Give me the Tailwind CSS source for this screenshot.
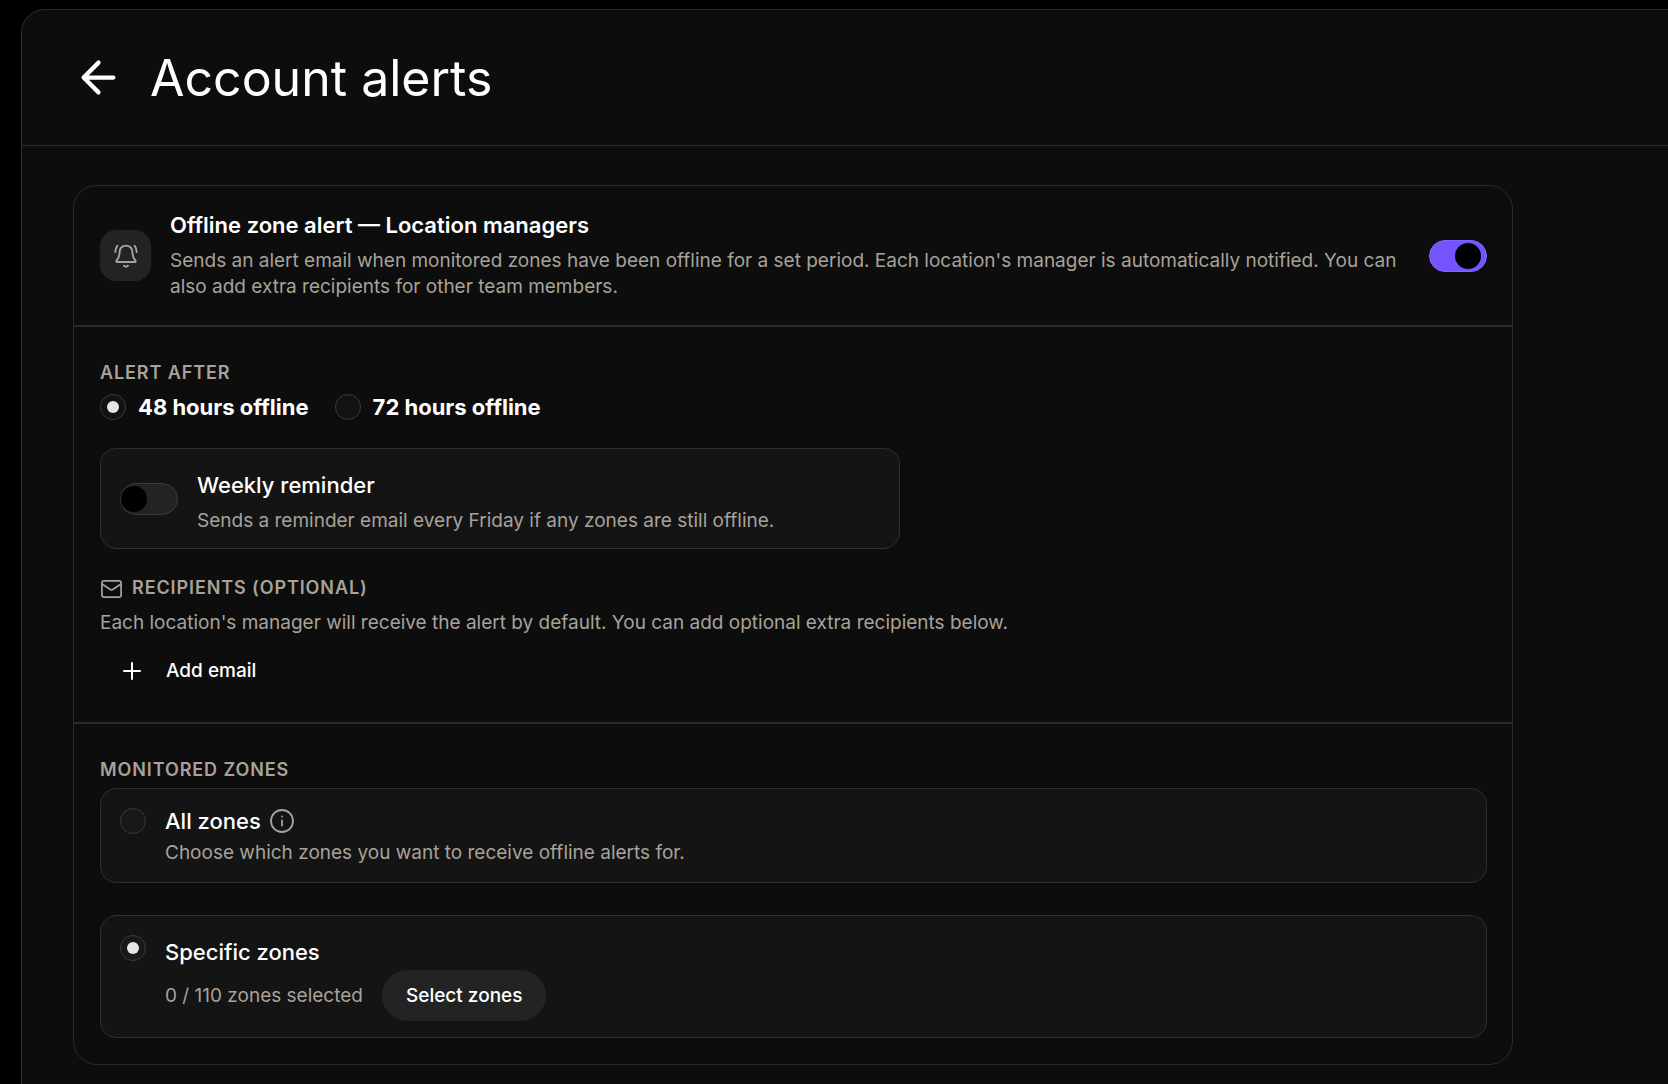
<!DOCTYPE html>
<html lang="en">
<head>
<meta charset="utf-8">
<meta name="viewport" content="width=device-width, initial-scale=1">
<title>Account alerts</title>
<script src="https://cdn.jsdelivr.net/npm/@tailwindcss/browser@4"></script>
</head>
<body class="min-h-screen bg-black pt-[9px] pl-[21px] font-['Inter',sans-serif] text-[19px] leading-[26px] text-[#a8a29a]">
<main class="flex min-h-[calc(100vh-9px)] flex-col rounded-tl-3xl border-t border-l border-[#2b2b2b] bg-[#0d0d0d]">
  <header class="flex h-[136px] items-center gap-[26px] border-b border-[#2b2b2b] px-[51px]">
    <button type="button" aria-label="Back" class="size-[51px] text-white">
      <svg class="size-full" viewBox="0 0 24 24" fill="none" stroke="currentColor" stroke-width="2" stroke-linecap="round" stroke-linejoin="round"><path d="M19 12H5M12 5l-7 7 7 7"/></svg>
    </button>
    <h1 class="text-[50px] leading-[60px] text-white">Account alerts</h1>
  </header>

  <div class="px-[51px] py-[39px]">
    <div class="max-w-[1440px] rounded-3xl border border-[#2b2b2b]">
      <section class="flex items-center gap-[19px] border-b-2 border-[#2b2b2b] py-[25px] pr-[25px] pl-[26px]">
        <div class="flex size-[51px] shrink-0 items-center justify-center rounded-2xl bg-[#232323]">
          <svg class="size-[26px]" viewBox="0 0 26 26" fill="none" stroke="currentColor" stroke-width="1.9" stroke-linecap="round" stroke-linejoin="round"><path d="M13 2.600C9 2.600 6.600 5.500 6.600 9c0 4-1.100 6.500-3 8.600-.6.800-.2 1.400.6 1.400h17.600c.8 0 1.200-.6.6-1.400-1.900-2.100-3-4.600-3-8.600 0-3.500-2.400-6.400-6.400-6.400ZM4.300 2.800C3 4.500 2.400 6.500 2.300 9M21.700 2.800C23 4.500 23.600 6.500 23.700 9M11 22.700c1 1.200 3 1.200 4 0"/></svg>
        </div>
        <div class="flex-1">
          <h2 id="offline-title" class="text-[22px] leading-[28px] font-semibold text-white">Offline zone alert — Location managers</h2>
          <p class="mt-[9px] max-w-[1235px]">Sends an alert email when monitored zones have been offline for a set period. Each location's manager is automatically notified. You can also add extra recipients for other team members.</p>
        </div>
        <label class="relative h-8 w-[58px] shrink-0">
          <input type="checkbox" role="switch" checked aria-labelledby="offline-title" class="peer block size-full appearance-none rounded-full border border-[#3a3a3a] bg-[#232323] checked:border-[#8466ff] checked:bg-[#7553ff]">
          <span class="absolute top-[3px] left-px size-[26px] rounded-full bg-black peer-checked:left-[26px]"></span>
        </label>
      </section>

      <section class="border-b-2 border-[#2b2b2b] pt-[33px] pr-[25px] pb-[26px] pl-[26px]">
        <fieldset>
          <legend class="text-lg leading-[26px] font-semibold tracking-wider uppercase">Alert after</legend>
          <div class="mt-2 flex gap-[26px]">
            <label class="flex items-center gap-3 text-[22px] leading-[26px] font-bold text-white">
              <input type="radio" name="delay" checked class="flex size-[26px] appearance-none items-center justify-center rounded-full border border-[#3a3a3a] bg-[#121212] before:size-3 before:rounded-full checked:before:bg-[#e5e5e5]">48 hours offline
            </label>
            <label class="flex items-center gap-3 text-[22px] leading-[26px] font-bold text-white">
              <input type="radio" name="delay" class="flex size-[26px] appearance-none items-center justify-center rounded-full border border-[#3a3a3a] bg-[#121212] before:size-3 before:rounded-full checked:before:bg-[#e5e5e5]">72 hours offline
            </label>
          </div>
        </fieldset>

        <div class="mt-7 flex max-w-[800px] items-center gap-[19px] rounded-2xl border border-[#2f2f2f] bg-[#141414] px-[19px] py-[14px]">
          <label class="relative h-8 w-[58px] shrink-0">
            <input type="checkbox" role="switch" aria-labelledby="weekly-title" class="peer block size-full appearance-none rounded-full border border-[#3a3a3a] bg-[#232323] checked:border-[#8466ff] checked:bg-[#7553ff]">
            <span class="absolute top-[3px] left-px size-[26px] rounded-full bg-black peer-checked:left-[26px]"></span>
          </label>
          <div class="pt-2">
            <h3 id="weekly-title" class="text-[22px] leading-[28px] font-medium text-white">Weekly reminder</h3>
            <p class="mt-[9px]">Sends a reminder email every Friday if any zones are still offline.</p>
          </div>
        </div>

        <h3 class="mt-[26px] flex items-center gap-[9px] text-lg leading-[26px] font-semibold tracking-wider uppercase">
          <svg class="size-[23px]" viewBox="0 0 24 24" fill="none" stroke="currentColor" stroke-width="1.8" stroke-linecap="round" stroke-linejoin="round"><rect x="2" y="4" width="20" height="17" rx="2"/><path d="M2.500 7.500l8.300 5.600q1.200.7 2.400 0l8.300-5.600"/></svg>
          Recipients (optional)
        </h3>
        <p class="mt-[9px]">Each location's manager will receive the alert by default. You can add optional extra recipients below.</p>
        <button type="button" class="mt-[9px] flex h-[51px] items-center gap-[22px] px-5 font-medium text-white">
          <svg class="size-6" viewBox="0 0 24 24" fill="none" stroke="currentColor" stroke-width="2" stroke-linecap="round"><path d="M12 4v16M4 12h16"/></svg>
          Add email
        </button>
      </section>

      <section class="pt-[33px] pr-[25px] pb-[26px] pl-[26px]">
        <fieldset>
          <legend class="text-lg leading-[26px] font-semibold tracking-wider uppercase">Monitored zones</legend>
          <div class="mt-[5px] flex gap-[19px] rounded-2xl border border-[#2f2f2f] bg-[#141414] px-[19px] pt-[19px] pb-4">
            <input type="radio" name="zones" id="all" class="flex size-[26px] shrink-0 appearance-none items-center justify-center rounded-full border border-[#3a3a3a] bg-[#181818] before:size-3 before:rounded-full checked:before:bg-[#e5e5e5]">
            <div>
              <div class="flex items-center gap-[9px]">
                <label for="all" class="text-[22px] leading-[26px] font-medium text-white">All zones</label>
                <svg class="size-6" viewBox="0 0 24 24" fill="none" stroke="currentColor" stroke-width="1.8" stroke-linecap="round"><circle cx="12" cy="12" r="11"/><path d="M12 11.500v5M12 7.500v.1"/></svg>
              </div>
              <p class="mt-[6px]">Choose which zones you want to receive offline alerts for.</p>
            </div>
          </div>
          <div class="mt-8 flex gap-[19px] rounded-2xl border border-[#2f2f2f] bg-[#141414] px-[19px] pt-[19px] pb-4">
            <input type="radio" name="zones" id="specific" checked class="flex size-[26px] shrink-0 appearance-none items-center justify-center rounded-full border border-[#3a3a3a] bg-[#181818] before:size-3 before:rounded-full checked:before:bg-[#e5e5e5]">
            <div>
              <label for="specific" class="mt-1 block text-[22px] leading-[26px] font-medium text-white">Specific zones</label>
              <div class="mt-[5px] flex items-center gap-[19px]">
                <span>0 / 110 zones selected</span>
                <button type="button" class="h-[51px] rounded-full bg-[#232323] px-6 font-medium text-white">Select zones</button>
              </div>
            </div>
          </div>
        </fieldset>
      </section>
    </div>
  </div>
</main>
</body>
</html>
